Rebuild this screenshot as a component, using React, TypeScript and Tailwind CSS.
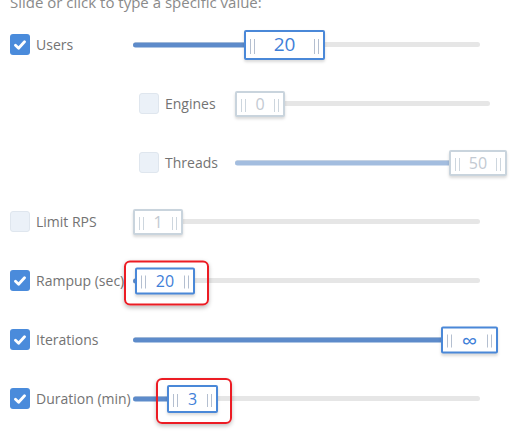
import React from 'react';

type Row = {
  label: string;
  checked: boolean;
  sub?: boolean;
  value: string;
  offset: number;
  thumbW: number;
  thumbH: number;
  big?: boolean;
  disabled?: boolean;
  highlight?: boolean;
};

const rows: Row[] = [
  { label: 'Users', checked: true, value: '20', offset: 111, thumbW: 81, thumbH: 30, big: true },
  { label: 'Engines', checked: false, sub: true, value: '0', offset: 0, thumbW: 50, thumbH: 26, disabled: true },
  { label: 'Threads', checked: false, sub: true, value: '50', offset: 214, thumbW: 58, thumbH: 26, disabled: true },
  { label: 'Limit RPS', checked: false, value: '1', offset: 0, thumbW: 50, thumbH: 26, disabled: true },
  { label: 'Rampup (sec)', checked: true, value: '20', offset: 2, thumbW: 60, thumbH: 27, highlight: true },
  { label: 'Iterations', checked: true, value: '∞', offset: 308, thumbW: 57, thumbH: 27 },
  { label: 'Duration (min)', checked: true, value: '3', offset: 34, thumbW: 51, thumbH: 28, highlight: true },
];

function Checkbox({ checked }: { checked: boolean }) {
  if (checked) {
    return (
      <div className="w-[20px] h-[21px] rounded-[3px] bg-[#4a8bdb] flex items-center justify-center shrink-0">
        <svg width="12" height="10" viewBox="0 0 12 10">
          <path d="M1.5 5.2 L4.6 8.2 L10.5 1.8" fill="none" stroke="#fff" strokeWidth="2.8" strokeLinecap="round" strokeLinejoin="round" />
        </svg>
      </div>
    );
  }
  return <div className="w-[20px] h-[21px] rounded-[3px] bg-[#ebf1f8] border border-[#dfe6ee] shrink-0" />;
}

function Grip({ disabled, big }: { disabled?: boolean; big?: boolean }) {
  const c = disabled ? 'bg-[#cdd6de]' : 'bg-[#b4bfd0]';
  const h = big ? 'h-[15px]' : 'h-[13px]';
  return (
    <div className={`flex gap-[3px] ${h} mt-[3px]`}>
      <div className={`w-px h-full ${c}`} />
      <div className={`w-px h-full ${c}`} />
    </div>
  );
}

function Slider({ row }: { row: Row }) {
  const fill = row.disabled ? 'bg-[#a3bddf]' : 'bg-[#5d8bca]';
  const border = row.disabled ? 'border-[#c9d4dd]' : 'border-[#4a88d8]';
  const text = row.disabled ? 'text-[#c3cad2]' : 'text-[#3f80d8]';
  const size = row.big ? 'text-[19px]' : row.value === '∞' ? 'text-[22px]' : 'text-[16px]';
  return (
    <div className="relative flex-1 h-[30px] flex items-center">
      <div className="w-full h-[5px] rounded-full bg-[#e6e6e6]" />
      <div
        className={`absolute left-0 top-1/2 -translate-y-1/2 h-[5px] rounded-full ${fill}`}
        style={{ width: row.offset + 4 }}
      />
      <div
        className="absolute top-1/2 -translate-y-1/2"
        style={{ left: row.offset }}
      >
        {row.highlight && (
          <div className="absolute -left-[11px] -right-[14px] -top-[7px] -bottom-[11px] border-2 border-[#ec1c24] rounded-[6px] shadow-[0_2px_4px_rgba(0,0,0,0.25)]" />
        )}
        <div
          className={`relative bg-white border-2 ${border} rounded-[2px] shadow-[0_2px_3px_rgba(0,0,0,0.15)] flex items-center justify-between px-[4px]`}
          style={{ width: row.thumbW, height: row.thumbH }}
        >
          <Grip disabled={row.disabled} big={row.big} />
          <span className={`${text} ${size} leading-none`}>{row.value}</span>
          <Grip disabled={row.disabled} big={row.big} />
        </div>
      </div>
    </div>
  );
}

export default function App() {
  return (
    <div className="w-[527px] h-[437px] bg-white overflow-hidden font-['Open_Sans',sans-serif]">
      <p className="-mt-[9px] pl-[10px] text-[15px] leading-[22px] text-[#8a8a8a]">
        Slide or click to type a specific value:
      </p>
      <div className="mt-[2px]">
        {rows.map((row) => (
          <div
            key={row.label}
            className={`h-[59px] flex items-center ${row.sub ? 'pl-[139px] pr-[37px]' : 'pl-[10px] pr-[47px]'}`}
          >
            <div className={`flex items-center gap-[6px] shrink-0 ${row.sub ? 'w-[96px]' : 'w-[123px]'}`}>
              <Checkbox checked={row.checked} />
              <span className="text-[14px] text-[#737373] whitespace-nowrap">{row.label}</span>
            </div>
            <Slider row={row} />
          </div>
        ))}
      </div>
    </div>
  );
}
